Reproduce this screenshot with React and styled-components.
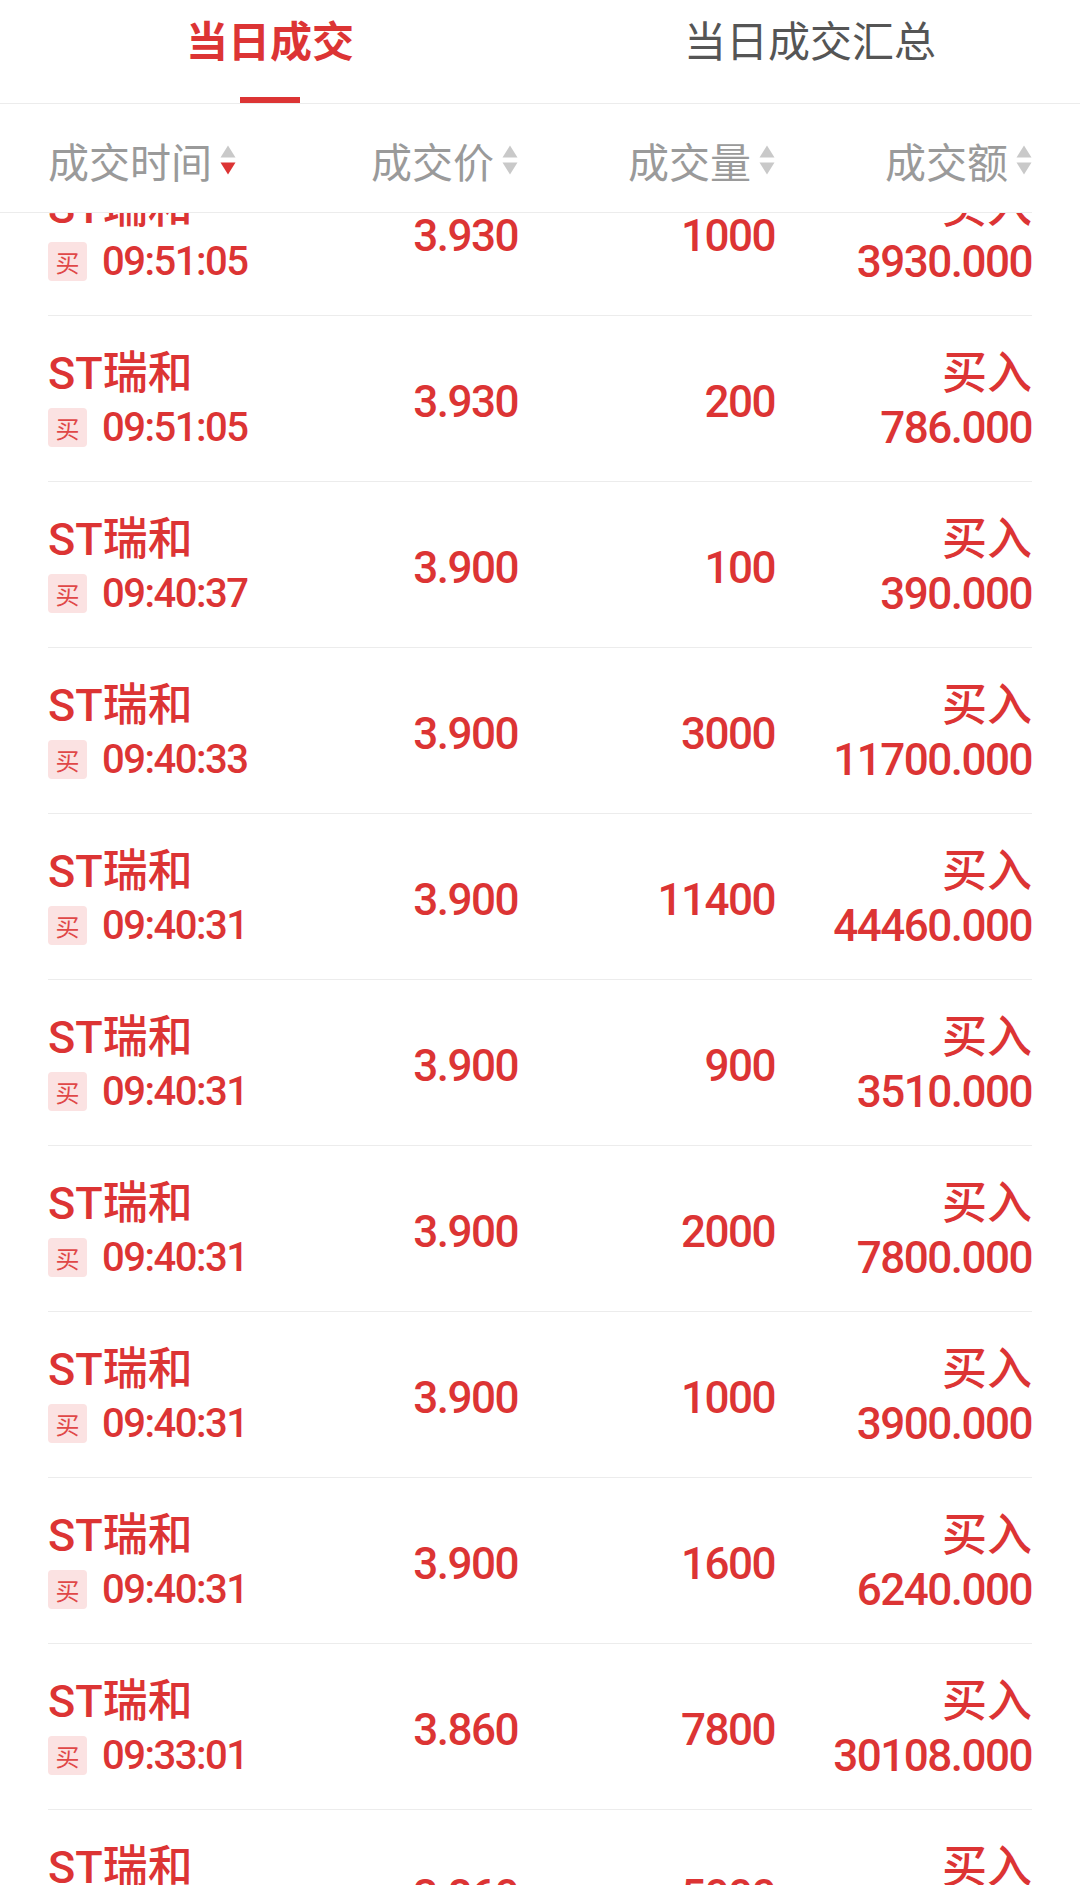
import React from "react";
import styled, { createGlobalStyle } from "styled-components";

const GlobalStyle = createGlobalStyle`
  html, body {
    margin: 0;
    padding: 0;
    background: #fff;
  }
  body {
    font-family: "Roboto", "Noto Sans CJK SC", sans-serif;
  }
`;

const RED = "#dc3434";

const Page = styled.div`
  width: 1080px;
  height: 1885px;
  display: flex;
  flex-direction: column;
  overflow: hidden;
  background: #fff;
`;

const TabBar = styled.div`
  display: flex;
  height: 104px;
  border-bottom: 1px solid #ececec;
  box-sizing: border-box;
`;

const Tab = styled.div`
  flex: 1;
  display: flex;
  flex-direction: column;
  align-items: center;
`;

const TabLabel = styled.div`
  height: 86px;
  line-height: 86px;
  font-size: 42px;
  font-weight: ${(p) => (p.active ? 700 : 400)};
  color: ${(p) => (p.active ? RED : "#555")};
`;

const TabIndicator = styled.div`
  margin-top: 11px;
  width: 60px;
  height: 6px;
  background: ${(p) => (p.active ? RED : "transparent")};
`;

const HeaderRow = styled.div`
  display: grid;
  grid-template-columns: 222px 248px 257px 257px;
  height: 109px;
  box-sizing: border-box;
  padding-left: 48px;
  margin-right: 48px;
  border-bottom: 1px solid #ececec;
  align-items: center;
`;

const HeaderCell = styled.div`
  display: flex;
  align-items: center;
  justify-content: ${(p) => (p.left ? "flex-start" : "flex-end")};
  gap: 8px;
  font-size: 41px;
  color: #9a9a9a;
  padding-top: 4px;
`;

const ListViewport = styled.div`
  flex: 1;
  overflow: hidden;
  padding: 0 48px;
`;

// list is shown scrolled a little, so the first row sits under the header
const List = styled.div`
  margin-top: -63px;
`;

const Row = styled.div`
  display: grid;
  grid-template-columns: 222px 248px 257px 257px;
  height: 166px;
  box-sizing: border-box;
  border-bottom: 1px solid #ececec;
  align-items: center;
  color: ${RED};
  font-weight: 500;
`;

const Stack = styled.div`
  display: flex;
  flex-direction: column;
  align-items: ${(p) => (p.right ? "flex-end" : "flex-start")};
`;

const Line = styled.div`
  display: flex;
  align-items: center;
  height: 58px;
  font-size: ${(p) => p.size || 44}px;
  letter-spacing: ${(p) => (p.num ? "-1.5px" : "0")};
  white-space: nowrap;
`;

const SideBadge = styled.span`
  display: inline-flex;
  align-items: center;
  justify-content: center;
  width: 39px;
  height: 39px;
  border-radius: 4px;
  background: #fbe2e2;
  color: #e04848;
  font-size: 24px;
  font-weight: 400;
  letter-spacing: 0;
  margin-right: 15px;
`;

const Value = styled.div`
  text-align: right;
  font-size: 44px;
  letter-spacing: -1.5px;
  padding-top: 6px;
  white-space: nowrap;
`;

const SortIcon = ({ dir }) => (
  <svg width="16" height="30" viewBox="0 0 16 30">
    <path d="M8 0.5 L15.5 12.5 L0.5 12.5 Z" fill={dir === "up" ? RED : "#c9c9c9"} />
    <path d="M0.5 17.5 L15.5 17.5 L8 29.5 Z" fill={dir === "down" ? RED : "#c9c9c9"} />
  </svg>
);

const columns = [
  { label: "成交时间", dir: "down", left: true },
  { label: "成交价" },
  { label: "成交量" },
  { label: "成交额" },
];

const trades = [
  { time: "09:51:05", price: "3.930", vol: "1000", amount: "3930.000" },
  { time: "09:51:05", price: "3.930", vol: "200", amount: "786.000" },
  { time: "09:40:37", price: "3.900", vol: "100", amount: "390.000" },
  { time: "09:40:33", price: "3.900", vol: "3000", amount: "11700.000" },
  { time: "09:40:31", price: "3.900", vol: "11400", amount: "44460.000" },
  { time: "09:40:31", price: "3.900", vol: "900", amount: "3510.000" },
  { time: "09:40:31", price: "3.900", vol: "2000", amount: "7800.000" },
  { time: "09:40:31", price: "3.900", vol: "1000", amount: "3900.000" },
  { time: "09:40:31", price: "3.900", vol: "1600", amount: "6240.000" },
  { time: "09:33:01", price: "3.860", vol: "7800", amount: "30108.000" },
  { time: "09:33:01", price: "3.860", vol: "5000", amount: "19300.000" },
];

const App = () => {
  return (
    <>
      <GlobalStyle />
      <Page>
        <TabBar>
          <Tab>
            <TabLabel active>当日成交</TabLabel>
            <TabIndicator active />
          </Tab>
          <Tab>
            <TabLabel>当日成交汇总</TabLabel>
            <TabIndicator />
          </Tab>
        </TabBar>

        <HeaderRow>
          {columns.map((c) => (
            <HeaderCell key={c.label} left={c.left}>
              {c.label}
              <SortIcon dir={c.dir} />
            </HeaderCell>
          ))}
        </HeaderRow>

        <ListViewport>
          <List>
            {trades.map((t, i) => (
              <Row key={i}>
                <Stack>
                  <Line size={45}>ST瑞和</Line>
                  <Line size={40} num>
                    <SideBadge>买</SideBadge>
                    {t.time}
                  </Line>
                </Stack>
                <Value>{t.price}</Value>
                <Value>{t.vol}</Value>
                <Stack right>
                  <Line size={45}>买入</Line>
                  <Line num>{t.amount}</Line>
                </Stack>
              </Row>
            ))}
          </List>
        </ListViewport>
      </Page>
    </>
  );
};

export default App;
